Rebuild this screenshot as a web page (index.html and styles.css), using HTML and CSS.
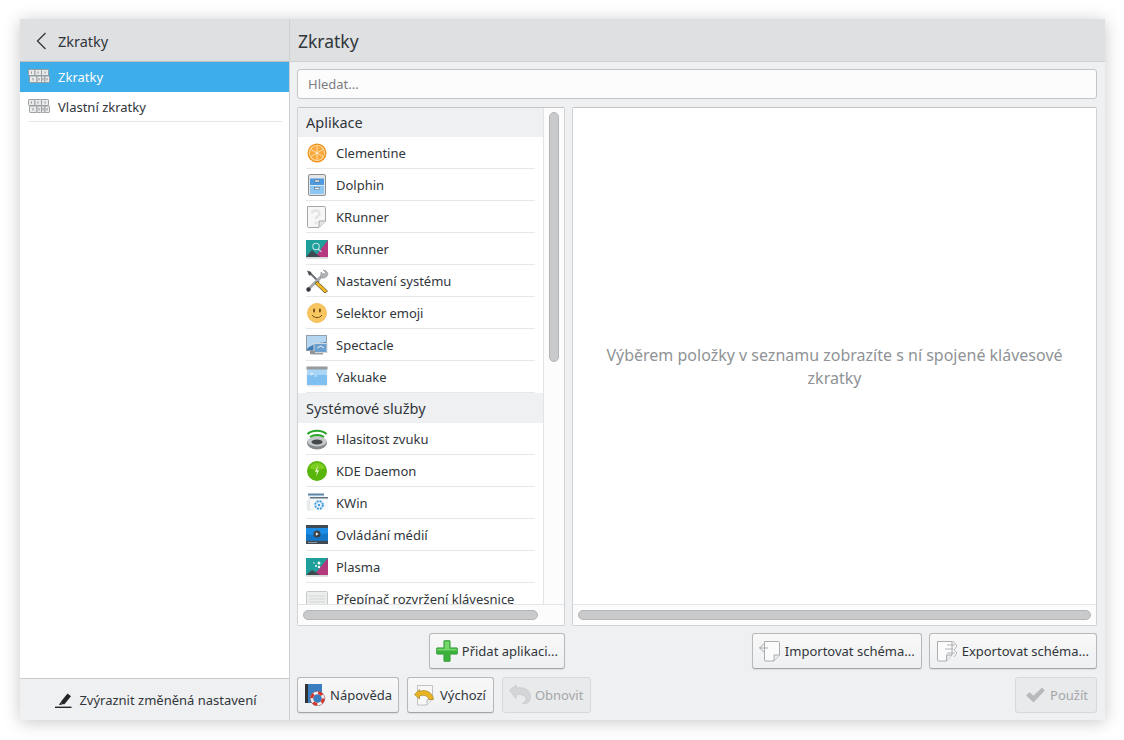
FILE: index.html
```html
<!DOCTYPE html>
<html lang="cs">
<head>
<meta charset="utf-8">
<title>Zkratky</title>
<link rel="stylesheet" href="styles.css">
</head>
<body>
<svg class="defs" width="0" height="0" aria-hidden="true">
  <defs>
    <symbol id="keys" viewBox="0 0 22 14">
      <g fill="#e9eaeb" stroke="#94989b" stroke-width=".9">
        <rect x=".5" y=".5" width="6.500" height="6" rx=".7"/><rect x="7" y=".5" width="6.500" height="6" rx=".7"/><rect x="13.500" y=".5" width="7" height="6" rx=".7"/>
        <rect x="1.500" y="7" width="7.500" height="6.500" rx=".7"/><rect x="9" y="7" width="4.500" height="6.500" rx=".7"/><rect x="13.500" y="7" width="3.500" height="6.500" rx=".7"/><rect x="17" y="7" width="4.500" height="6.500" rx=".7"/>
      </g>
      <path d="M3.500 2.500v2M10 2.500v2M17 2.500v2M5 9v2.500M11 9v2.500M15 9v2.500M19 9v2.500" stroke="#74787b" stroke-width=".8"/>
    </symbol>
  </defs>
</svg>
<main class="window">
  <aside class="sidebar">
    <header class="side-head">
      <svg class="back" width="12" height="18" viewBox="0 0 12 18"><path d="M10.500 1 2.500 9l8 8" fill="none" stroke="#31363b" stroke-width="1.300"/></svg>
      <span>Zkratky</span>
    </header>
    <nav class="side-list">
      <a class="side-item selected"><svg class="keys-ico" width="22" height="14"><use href="#keys"/></svg>Zkratky</a>
      <a class="side-item"><svg class="keys-ico" width="22" height="14"><use href="#keys"/></svg>Vlastní zkratky</a>
    </nav>
    <footer class="side-foot">
      <svg width="17" height="16" viewBox="0 0 17 16"><path d="M6 9.500 12.500 1.500l3.500 2.800-6.500 8H6.500z" fill="#232629"/><path d="M5.500 10 7 12.800 4 13z" fill="#232629"/><rect x="0" y="14.600" width="16.500" height="1.400" fill="#232629"/></svg>
      <span>Zvýraznit změněná nastavení</span>
    </footer>
  </aside>
  <section class="content">
    <header class="main-head">Zkratky</header>
    <div class="body">
      <div class="search">Hledat...</div>
      <div class="panes">
        <div class="pane list-pane">
          <div class="list-wrap">
            <div class="list-view">
              <div class="group first">Aplikace</div>
              <div class="row"><svg width="24" height="24" viewBox="0 0 24 24"><circle cx="12" cy="12" r="9.500" fill="#f0921a"/><circle cx="12" cy="12" r="8" fill="#ffe2b5"/><circle cx="12" cy="12" r="7.200" fill="#f9a83c"/><g stroke="#ffe2b5" stroke-width=".9"><path d="M12 4.800v14.400M5.800 8.400l12.400 7.200M18.200 8.400 5.800 15.600"/></g><circle cx="12" cy="12" r="1.200" fill="#ffe9c8"/></svg><span>Clementine</span></div>
              <div class="row"><svg width="24" height="24" viewBox="0 0 24 24"><rect x="3.500" y="1.500" width="17" height="21" rx="1.500" fill="#e4e6e8" stroke="#8b8f92"/><rect x="5" y="5.500" width="14" height="15.500" fill="#4f9ae0"/><rect x="5" y="13" width="14" height="8" fill="#8cc6f4"/><path d="M5 12.500h14" stroke="#d8e6f2"/><rect x="9.500" y="7" width="5" height="2" fill="#eef2f5" stroke="#465a6c" stroke-width=".5"/><rect x="9.500" y="14.500" width="5" height="2" fill="#eef2f5" stroke="#465a6c" stroke-width=".5"/></svg><span>Dolphin</span></div>
              <div class="row"><svg width="24" height="24" viewBox="0 0 24 24"><path d="M2.500 1.500h17a1 1 0 0 1 1 1V16l-6.500 6.500H3.500a1 1 0 0 1-1-1z" fill="#f7f7f7" stroke="#a5a8aa"/><path d="M14 22v-6h6.500" fill="#e6e6e6" stroke="#a5a8aa"/><path d="M7 8.500c0-4 7.500-4 7.500 0 0 3-3.500 2.500-3.500 5.500" fill="none" stroke="#e3e3e3" stroke-width="2.400"/><circle cx="11" cy="18" r="1.500" fill="#e3e3e3"/></svg><span>KRunner</span></div>
              <div class="row"><svg width="24" height="24" viewBox="0 0 24 24"><rect x="1" y="3" width="22" height="17" fill="#1f9f9a"/><path d="M23 3v17H10z" fill="#b5397d"/><path d="M1 20l6-7 8 7z" fill="#3d4a4f"/><circle cx="11" cy="9.500" r="3.200" fill="none" stroke="#bfe3e6" stroke-width="1.100"/><path d="m13.300 11.800 3 3" stroke="#bfe3e6" stroke-width="1.200"/><rect x="1" y="20" width="22" height="1.800" fill="#d8dadb"/></svg><span>KRunner</span></div>
              <div class="row"><svg width="24" height="24" viewBox="0 0 24 24"><path d="M4 3 14 13" stroke="#6c7074" stroke-width="2"/><path d="M2 1.500 6 3l.5 3L4 6.500z" fill="#4d5155"/><path d="M19 5 3.500 20" stroke="#a6a9ac" stroke-width="3"/><path d="M23 4.500a5 5 0 0 1-7.500 4l.5-5.500 2.500 2.500 2-2-2.500-2.500a5 5 0 0 1 5 3.500z" fill="#b0b3b6" stroke="#7c8083" stroke-width=".4"/><path d="m12.500 12.500 10 9.500-2.500 2-10-9.500z" fill="#f2b81f" stroke="#3f3a1c" stroke-width=".7"/><circle cx="3.500" cy="20.500" r="2.200" fill="#33363a"/></svg><span>Nastavení systému</span></div>
              <div class="row"><svg width="24" height="24" viewBox="0 0 24 24"><circle cx="12" cy="12" r="9.500" fill="#f8c660"/><circle cx="12" cy="12" r="9.500" fill="none" stroke="#f0b44a" stroke-width=".8"/><rect x="8.200" y="7.500" width="1.800" height="4" rx=".9" fill="#6d4c16"/><rect x="14" y="7.500" width="1.800" height="4" rx=".9" fill="#6d4c16"/><path d="M7 14c2.500 3.500 7.500 3.500 10 0" fill="none" stroke="#6d4c16" stroke-width="1"/></svg><span>Selektor emoji</span></div>
              <div class="row"><svg width="24" height="24" viewBox="0 0 24 24"><rect x="1.500" y="2.500" width="20" height="15" fill="#3f7cb8" stroke="#8f969b" stroke-width=".8"/><path d="M2 3h19v6C14 10 7 11 2 16z" fill="#b4d6f0"/><rect x="9" y="10.500" width="13" height="9" fill="#6a9fce" stroke="#d4d7d9"/><path d="M12 15l4-2 3 2" stroke="#e8eef2" fill="none"/><rect x="5" y="18" width="5" height="3" fill="#8f9396"/><rect x="6" y="20" width="12" height="1.500" fill="#979b9e"/></svg><span>Spectacle</span></div>
              <div class="row"><svg width="24" height="24" viewBox="0 0 24 24"><rect x="2" y="2" width="20" height="18.500" fill="#a9d6f7" stroke="#dce4ea" stroke-width=".5"/><rect x="2" y="10" width="20" height="10.500" fill="#7fc0f0"/><rect x="1.500" y="1.500" width="21" height="3" fill="#999c9f"/><rect x="2" y="20" width="20" height="1.500" fill="#e6e8ea"/><path d="m5 7.500 3 1.400-3 1.400M9 11h3" stroke="#e9f4fc" fill="none" stroke-width=".8"/></svg><span>Yakuake</span></div>
              <div class="group">Systémové služby</div>
              <div class="row"><svg width="24" height="24" viewBox="0 0 24 24"><ellipse cx="12" cy="16" rx="10" ry="6.500" fill="#85898c"/><ellipse cx="12" cy="14.500" rx="9.500" ry="5" fill="#c6c9cb"/><ellipse cx="12" cy="15" rx="5.500" ry="2.600" fill="#44484b"/><path d="M2.500 7C7 2.500 17 2.500 21.500 7M5 10c4-2.700 10-2.700 14 0" fill="none" stroke="#2aa52a" stroke-width="2"/></svg><span>Hlasitost zvuku</span></div>
              <div class="row"><svg width="24" height="24" viewBox="0 0 24 24"><circle cx="12" cy="12" r="10" fill="#58b50c"/><path d="M4 9a9 9 0 0 1 16 0c-5 2-11 2-16 0z" fill="#7ece22"/><path d="M13 6.500 9.800 12.800H12L11 17.500l3.200-6.300H12z" fill="#e2f6c6"/></svg><span>KDE Daemon</span></div>
              <div class="row"><svg width="24" height="24" viewBox="0 0 24 24"><rect x="3" y="2.500" width="16" height="10" fill="#eef1f3"/><rect x="3" y="2.500" width="16" height="2" fill="#5c89ad"/><rect x="5" y="6" width="18" height="13" fill="#f7f8f9"/><rect x="5" y="6" width="18" height="1.500" fill="#5f7484"/><path d="M1.500 9.500h3.500v9h3v1h-6z" fill="#e7e9eb"/><circle cx="14" cy="14" r="3.800" fill="none" stroke="#3b9be0" stroke-width="2" stroke-dasharray="2 1"/><circle cx="14" cy="14" r="1.200" fill="#3b9be0"/></svg><span>KWin</span></div>
              <div class="row"><svg width="24" height="24" viewBox="0 0 24 24"><rect x="1" y="2" width="22" height="19" fill="#3f4a54"/><rect x="1" y="5" width="22" height="12.500" fill="#1c8de6"/><path d="M1 17.500V11c8 2 15 1 22-1v7.500z" fill="#1476c8"/><circle cx="12" cy="11" r="3.600" fill="#3a3f44"/><path d="m10.800 9.300 3 1.700-3 1.700z" fill="#eceff1"/><rect x="3" y="19" width="9" height="1" fill="#8f979d"/></svg><span>Ovládání médií</span></div>
              <div class="row"><svg width="24" height="24" viewBox="0 0 24 24"><rect x="1" y="3" width="22" height="17" fill="#1f9f9a"/><path d="M23 3v17H9z" fill="#b5397d"/><path d="M1 20l6-5 8 5z" fill="#3d4a4f"/><circle cx="14" cy="8" r="1.500" fill="#fff"/><circle cx="11" cy="11" r="1" fill="#fff"/><circle cx="14" cy="12" r="1.200" fill="#fff"/><circle cx="9" cy="8" r=".7" fill="#fff"/><rect x="1" y="20" width="22" height="1.800" fill="#d8dadb"/></svg><span>Plasma</span></div>
              <div class="row"><svg width="24" height="24" viewBox="0 0 24 24"><rect x="1.500" y="4.500" width="21" height="17" rx="1" fill="#eceded" stroke="#c4c6c8"/><path d="M4 9h16M4 12h16M4 15h16" stroke="#d3d5d6"/></svg><span>Přepínač rozvržení klávesnice</span></div>
            </div>
            <div class="vtrack"><div class="vthumb"></div></div>
          </div>
          <div class="htrack"><div class="hthumb short"></div></div>
        </div>
        <div class="pane detail-pane">
          <div class="placeholder"><p>Výběrem položky v seznamu zobrazíte s ní spojené klávesové zkratky</p></div>
          <div class="htrack"><div class="hthumb"></div></div>
        </div>
      </div>
      <div class="scheme-row">
        <div class="add-slot">
          <button class="btn"><svg width="22" height="22" viewBox="0 0 24 24"><path d="M8.500 1.500a1 1 0 0 1 1-1h5a1 1 0 0 1 1 1v7h7a1 1 0 0 1 1 1v5a1 1 0 0 1-1 1h-7v7a1 1 0 0 1-1 1h-5a1 1 0 0 1-1-1v-7h-7a1 1 0 0 1-1-1v-5a1 1 0 0 1 1-1h7z" fill="#3cb23c" stroke="#1f8a26" stroke-width=".6"/><path d="M9.500 9.500v-8h5v8h8v2h-21v-2z" fill="#76d568"/></svg>Přidat aplikaci...</button>
        </div>
        <div class="scheme-actions">
          <button class="btn"><svg width="22" height="22" viewBox="0 0 22 22"><path d="M5.500 1.500h14a1 1 0 0 1 1 1V15l-5.500 6H6.500a1 1 0 0 1-1-1z" fill="#fbfbfb" stroke="#a2a5a7" stroke-width=".9"/><path d="M15 21v-6h5.500" fill="#ececec" stroke="#a2a5a7" stroke-width=".9"/><path d="M4 2v3H1v3h3v3" fill="#f4f4f4"/><path d="M5 4 2.500 6 .5 8H9M.5 8 5 12" fill="none" stroke="#989b9d" stroke-width=".8"/></svg>Importovat schéma...</button>
          <button class="btn wide"><svg width="22" height="22" viewBox="0 0 22 22"><path d="M1.500 1.500h14.500v13.500l-5.500 6H2.500a1 1 0 0 1-1-1z" fill="#fbfbfb" stroke="#a2a5a7" stroke-width=".9"/><path d="M10.500 21v-6H16" fill="#ececec" stroke="#a2a5a7" stroke-width=".9"/><path d="m17 1 4 5-3 4 3 3-3 4" fill="#fbfbfb" stroke="#a2a5a7" stroke-width=".8"/><path d="M11 5h8M9 9h8M11 13h8" stroke="#a2a5a7" stroke-width=".8"/></svg>Exportovat schéma...</button>
        </div>
      </div>
      <div class="dialog-row">
        <div class="btn-group">
          <button class="btn"><svg width="22" height="22" viewBox="0 0 22 22"><rect x="1" y="0" width="3" height="19" fill="#2f3336"/><rect x="4" y="0" width="14" height="19" fill="#3a7ebf"/><circle cx="13.500" cy="14.500" r="5.800" fill="none" stroke="#f0f0f0" stroke-width="3"/><circle cx="13.500" cy="14.500" r="5.800" fill="none" stroke="#d9342b" stroke-width="3" stroke-dasharray="4.500 4.600"/><circle cx="13.500" cy="14.500" r="7.300" fill="none" stroke="#7e3b3a" stroke-width=".5"/></svg>Nápověda</button>
          <button class="btn wide"><svg width="22" height="22" viewBox="0 0 22 22"><path d="M3.500 1.500h15v14l-5.500 5.500H3.500z" fill="#f8f8f8" stroke="#b2b4b6" stroke-width=".8"/><path d="M13 21v-5.500h5.500" fill="#ececec" stroke="#b2b4b6" stroke-width=".8"/><path d="M0.500 10.500 5.500 15v-3c4-1.500 8-.5 9.500 3.500h4.500C19 9 12 4.500 5.500 7.500V5.500z" fill="#e8b422" stroke="#9c7a18" stroke-width=".6"/></svg>Výchozí</button>
          <button class="btn disabled wide"><svg width="22" height="22" viewBox="0 0 22 22"><path d="M0.500 6 7.500 1v3c7-1.500 14 1.500 14 9 0 3-1.500 5.500-4 6.500-1.500.5-3 .5-4 0 3-1.500 4-4 3-6-1-2.500-5-3.500-9.500-2.500v3.500z" fill="#d4d5d7" stroke="#c4c5c7" stroke-width=".6"/></svg>Obnovit</button>
        </div>
        <button class="btn disabled apply"><svg width="22" height="22" viewBox="0 0 22 22"><path d="M2.500 11.500 5.500 8.500l4 3.500 8.500-8 2.500 2.500L9.500 18z" fill="#b8babc" stroke="#a8aaac" stroke-width=".5"/></svg>Použít</button>
      </div>
    </div>
  </section>
</main>
</body>
</html>
```

FILE: styles.css
```css
* { box-sizing: border-box; }
html, body { margin: 0; height: 100%; background: #fff; overflow: hidden; }
body {
  padding: 19px 19px 20px 20px;
  font-family: "Noto Sans", sans-serif;
  font-size: 13px;
  color: #31363b;
}
.defs { position: absolute; }
svg { display: block; flex: none; }

.window {
  height: 701px;
  display: flex;
  background: #eff0f1;
  box-shadow: 0 2px 16px rgba(0, 0, 0, .22);
}

.sidebar {
  width: 270px;
  display: flex;
  flex-direction: column;
  border-right: 1px solid #cdcfd1;
  background: #fff;
}
.side-head {
  height: 43px;
  display: flex;
  align-items: center;
  padding-left: 15px;
  padding-top: 2px;
  gap: 11px;
  font-size: 14.500px;
  background: #dee0e2;
  border-bottom: 1px solid #bcbfc2;
}
.side-list { flex: 1; }
.side-item {
  height: 30px;
  display: flex;
  align-items: center;
  gap: 8px;
  padding-left: 8px;
  color: #31363b;
  background-image: linear-gradient(#e6e7e8, #e6e7e8);
  background-size: 254px 1px;
  background-position: 8px 29px;
  background-repeat: no-repeat;
}
.side-item.selected { background: #3daee9; color: #fcfcfc; }
.keys-ico { margin-top: -2px; }
.side-foot {
  height: 42px;
  display: flex;
  align-items: center;
  justify-content: center;
  gap: 7px;
  background: #eff0f1;
  border-top: 1px solid #c8cacc;
  padding-left: 3px;
}

.content { flex: 1; min-width: 0; display: flex; flex-direction: column; }
.main-head {
  height: 43px;
  display: flex;
  align-items: center;
  padding-left: 8px;
  padding-top: 1px;
  font-size: 17.500px;
  background: #dee0e2;
  border-bottom: 1px solid #cfd1d3;
}
.body {
  flex: 1;
  display: flex;
  flex-direction: column;
  padding: 7px 8px 7px 7px;
}
.search {
  height: 30px;
  display: flex;
  align-items: center;
  padding-left: 10px;
  background: #fcfcfc;
  border: 1px solid #c3c5c7;
  border-radius: 3px;
  color: #7b7f83;
}
.panes { display: flex; gap: 7px; margin-top: 8px; height: 519px; }
.pane {
  display: flex;
  flex-direction: column;
  background: #fcfcfc;
  border: 1px solid #d0d2d4;
  border-top-color: #c2c4c6;
  border-radius: 2px;
  overflow: hidden;
}
.list-pane { width: 268px; }
.detail-pane { flex: 1; }
.list-wrap { flex: 1; min-height: 0; display: flex; }
.list-view {
  width: 246px;
  overflow: hidden;
  background: #fff;
  border-right: 1px solid #e3e4e5;
}
.group {
  height: 30px;
  display: flex;
  align-items: center;
  padding-left: 8px;
  font-size: 14.500px;
  background: #eff0f1;
}
.group.first { height: 29px; padding-bottom: 2px; }
.row {
  height: 32px;
  display: flex;
  align-items: center;
  gap: 6px;
  margin: 0 8px;
  border-bottom: 1px solid #e6e7e8;
  white-space: nowrap;
}
.row svg { margin: 0 1px 0 -1px; }
.row span { padding-top: 1px; }
.vtrack { flex: 1; padding: 4px 0 0 5px; }
.vthumb {
  width: 10px;
  height: 250px;
  background: #c8cacb;
  border: 1px solid #b3b5b7;
  border-radius: 5px;
}
.htrack {
  height: 21px;
  padding: 5px 5px 0;
  border-top: 1px solid #e3e4e5;
  background: #fcfcfc;
}
.hthumb {
  height: 10px;
  background: #c8cacb;
  border: 1px solid #b3b5b7;
  border-radius: 5px;
}
.hthumb.short { width: 235px; }
.placeholder {
  flex: 1;
  display: flex;
  align-items: center;
  justify-content: center;
  padding-top: 21px;
  background: #fff;
}
.placeholder p {
  margin: 0;
  width: 470px;
  text-align: center;
  font-size: 16px;
  line-height: 23px;
  color: #8f9396;
}

.scheme-row { display: flex; margin-top: 7px; }
.add-slot { width: 268px; display: flex; justify-content: flex-end; }
.scheme-actions { flex: 1; display: flex; justify-content: flex-end; gap: 7px; }
.dialog-row { display: flex; justify-content: space-between; margin-top: 8px; }
.btn-group { display: flex; gap: 8px; }
.btn {
  height: 36px;
  display: flex;
  align-items: center;
  gap: 4px;
  padding: 0 6px;
  font: inherit;
  color: #31363b;
  background: linear-gradient(#f8f8f9, #eff0f1);
  border: 1px solid #b7b9bb;
  border-bottom-color: #a3a5a7;
  border-radius: 3px;
  box-shadow: 0 1px 1px rgba(0, 0, 0, .08);
  white-space: nowrap;
}
.btn.wide { padding-right: 7px; }
.btn.disabled {
  background: #e9eaeb;
  border-color: #d6d8d9;
  box-shadow: none;
  color: #a4a7aa;
}
.apply { width: 82px; justify-content: center; }
```
